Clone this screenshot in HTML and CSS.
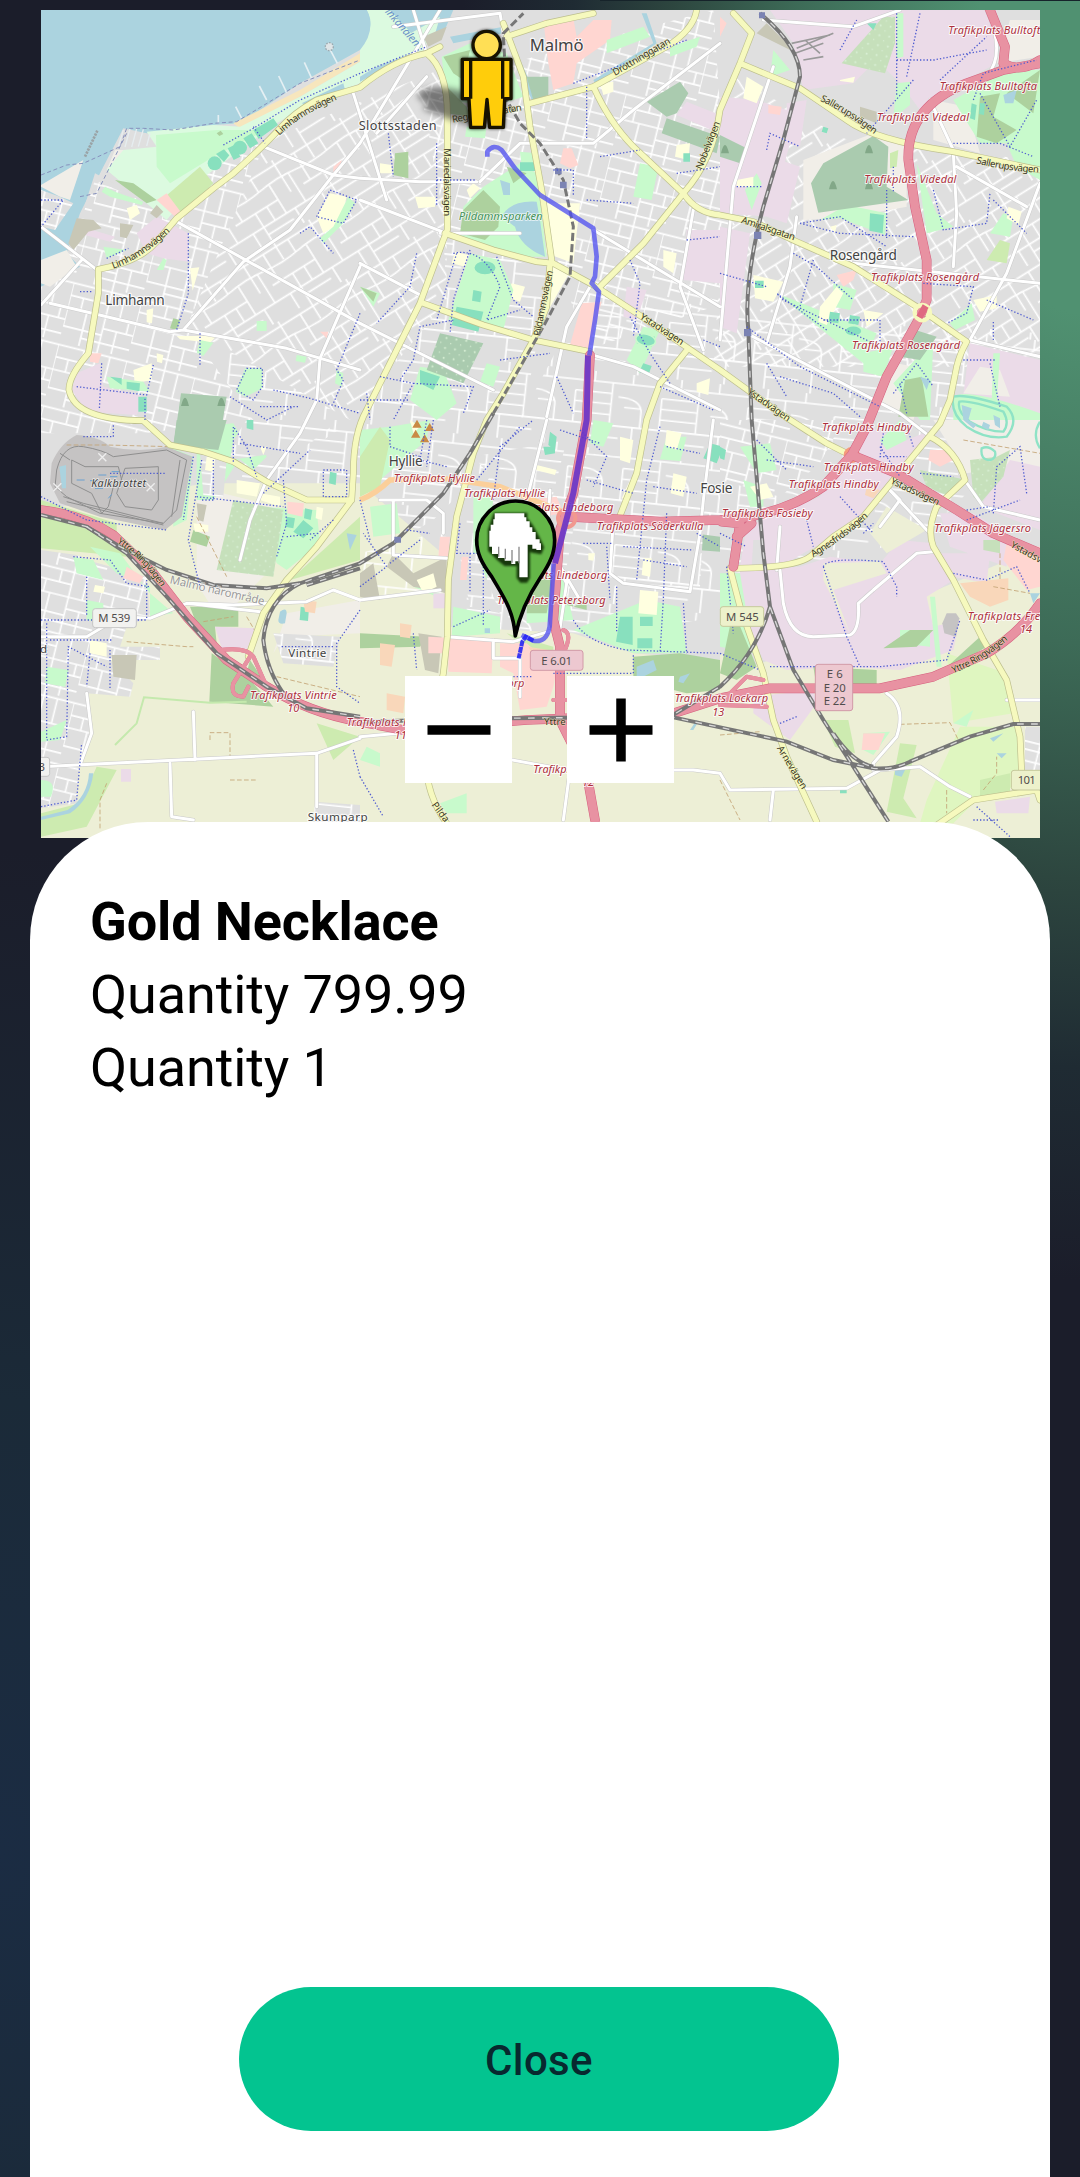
FILE: index.html
```html
<!DOCTYPE html>
<html lang="en">
<head>
<meta charset="utf-8">
<title>Order tracking</title>
<link rel="stylesheet" href="styles.css">
</head>
<body>
<main class="screen">
<section class="map">
<svg class="map-canvas" viewBox="123 30 2997 2484" preserveAspectRatio="none" role="img" aria-label="Map of Malmö">
<defs>
<pattern id="grid-a" width="210" height="190" patternUnits="userSpaceOnUse" patternTransform="rotate(14)"><path class="street" d="M0 10H210M0 48H118M0 86H210M118 122H210M0 142H118M60 166H210M0 10V142M40 48V86M80 10V48M118 0V190M160 10V86M190 86V122M60 86V190M160 122V190"/></pattern>
<pattern id="grid-b" width="240" height="210" patternUnits="userSpaceOnUse" patternTransform="rotate(-32)"><path class="street" d="M0 16H240M0 60Q60 70 120 60T240 60M0 110H150M0 158H240M70 184H160M24 16V110M70 0V60M70 110V210M112 16V60M150 60V158M196 0V110M218 60V158M32 158V210M180 158V210M110 110V158"/></pattern>
<pattern id="grid-c" width="260" height="230" patternUnits="userSpaceOnUse" patternTransform="rotate(6)"><path class="street" d="M0 30H260M20 62H130M20 94H130M20 126H130M0 158H260M150 70Q220 70 222 110V158M170 100H222M20 62V158M130 30V158M60 158V230M60 194H160M200 158V230M75 0V30M190 0V30"/></pattern>
<pattern id="orchard" width="30" height="30" patternUnits="userSpaceOnUse" patternTransform="rotate(8)"><circle class="tree" cx="8" cy="8" r="3"/><circle class="tree" cx="23" cy="23" r="2"/></pattern>
</defs>

<rect class="residential" x="123" y="30" width="2997" height="2484"/>
<path fill="url(#grid-b)" d="M800 420L1340 200 1340 900 1050 1260 560 980Z"/>
<path fill="url(#grid-a)" d="M123 720L800 420 560 980 760 1260 430 1300 123 1300Z"/>
<path fill="url(#grid-c)" d="M760 1260L560 980 1050 1260 1340 900 1330 700 1650 820 1560 1300 1300 1560 1060 1700 700 1560Z"/>
<path fill="url(#grid-a)" d="M1260 260L2140 30 2200 900 1760 1050 1640 680 1340 700Z"/>
<path fill="url(#grid-c)" d="M1760 880L3120 1000 3120 1260 2800 1580 2100 1860 1400 1960 1400 1560Z"/>
<path fill="url(#grid-b)" d="M2200 230L2560 430 3120 480 3120 1100 2140 1100Z"/>

<!-- north-west: coast and Limhamn -->
<g>
<path class="water" d="M123 30H1360L1330 100 1080 150 900 250 720 370 640 375 440 400 370 385 310 500 240 640 200 760 240 800 123 860Z"/>
<path class="bare" d="M123 555L250 480 210 600 180 590 123 560ZM345 450H470L440 510 320 510Z"/>
<path class="residential" d="M123 570L180 590 220 610 165 690 123 680ZM285 520L540 655 440 740 290 810 215 740Z"/>
<path fill="url(#grid-a)" d="M285 540L540 655 440 740 290 810 215 740ZM123 570L220 610 165 690 123 680Z"/>
<path class="bare" d="M123 780L200 750 230 800 150 860 123 850Z"/>
<path class="sand" d="M700 370L900 270 1080 160 1080 185 900 290 720 385Z"/>
<path class="lawn" d="M440 395L640 375 720 380 900 290 1080 185 1320 50 1300 120 1080 250 950 300 830 370 600 540 500 660 320 510 370 450 470 440Z"/>
<path class="park" d="M468 405L650 390H800L640 470 510 550 470 500Z"/>
<path class="meadow" d="M495 590L600 500 640 550 545 645 510 610Z"/>
<path class="retail" d="M470 600L500 580 545 640 530 655Z"/>
<path class="water" d="M905 310L1030 250 1035 270 920 315Z"/>
<path class="forest" d="M345 540L400 550 470 600 440 610ZM540 960l-20-5-10 30 20 5ZM650 400l12-8 8 10-12 6Z"/>
<path class="pitch" d="M683 445l20-10 18 35-20 10ZM730 415l25-15 20 30-25 15ZM760 390l60-35 14 20-58 42ZM985 608l30 15-14 24-24-18Z"/>
<circle class="pitch" cx="644" cy="490" r="21"/><circle class="pitch" cx="720" cy="443" r="21"/><path class="pitch" d="M648 462l24-14 16 18-16 20Z"/>
<path class="industrial" d="M410 700L470 650 565 700V785L490 775 440 760ZM260 685L345 710 330 725 255 705ZM230 1120L300 1090 310 1160 440 1190 410 1245 260 1235 215 1170Z"/>
<path class="builtup" d="M230 655l50 5 25 25-40 10-45 55-15-20ZM360 670l40 5-20 40-20-5ZM450 640l20-25 20 20-20 20Z"/>
<path class="school" d="M380 625l30-10 10 25-30 20ZM570 805l28-3-20 70ZM950 650l40-70 50 10-20 80-50 30ZM440 930l20-5-4 45-16-3ZM400 1110l55-20 0 50-50 10ZM470 1060l20 5-4 25-15-5ZM530 1008h120l-20 20-90-10Z"/>
<path class="park" d="M310 740l70 10-60 25ZM470 810l20-35 10 5-10 30ZM1000 680l45-90 20 20-35 60-60 60-10-15ZM600 1020l40 8-30 40-20-10ZM735 1105h52v60l-50 25-30-15ZM320 1130l110 15 20 30-120-10ZM770 963h30v30h-30ZM330 590l-25-15 10-15 30 15 85 30-5 10ZM1010 1110l20 10-5 40-20-10ZM890 1065l30 5-5 18-28-5Z"/>
<path class="pitch" d="M330 1130l35 5v20ZM380 1145l40 5-2 24-38-8ZM415 1190h25v45h-25Z"/>
<path class="retail" d="M270 1060h35l-10 30-25-5ZM1000 500l25-20-6 25-19 12ZM960 995l25 0-5 20Z"/>
<path class="cemetery" d="M543 1180L680 1190 655 1340H520Z"/>
<path class="trees" d="M543 1218q12-50 24 0ZM652 1218q12-50 24 0Z"/>
<path class="marina" d="M370 390l-15 50M390 386l-15 55M410 386l-15 55M430 388l-15 52M450 400l-10 38"/>
<path class="pier" d="M725 355l-18-35M800 300l-22-42M860 278l-24-50M935 235l-22-48M1012 190l-22-42M655 370V345"/>
<path class="mole" d="M255 470L292 392"/><circle class="lighthouse" cx="988" cy="140" r="12"/>
<path class="ferry" d="M123 525L200 495 250 490 360 440 380 385 430 385 520 390 640 370 710 365 900 250 1080 180M240 590L290 580 380 400"/>
</g>

<!-- north: Malmö centre -->
<g transform="translate(1080 0)">
<path class="lawn" d="M20 30H90L200 150 100 170 0 230V140Q50 80 20 30Z"/>
<path class="water" d="M0 30H20Q50 90 0 150ZM0 230Q90 170 200 158L190 172Q90 190 0 245ZM270 110L430 80V100L280 130ZM700 240L880 130 845 40H860L890 130 710 258ZM480 180L530 290 520 310 470 200Z"/>
<path class="park" d="M245 170L330 130 440 160 490 290 400 320 260 300Z"/>
<path class="forest" d="M250 170L330 150 310 240 280 220ZM240 240L320 320 330 350 260 340Z"/>
<path class="cemetery" d="M500 230H565V285L520 300ZM860 305L960 245 985 280 950 340 920 350ZM920 355L1080 410 1070 460 905 400Z"/>
<path class="industrial" d="M980 305L1080 345 1055 390 950 345ZM980 690H1080V850L970 840ZM800 860l60 10-30 90-40-10Z"/>
<path class="retail" d="M550 60L640 55 650 110 700 60H755L750 120 650 190 640 250 580 270 565 190ZM610 445l25 0 20 50-25 10-30-15ZM665 910l60-5-40 145-55-15Z"/>
<path class="builtup" d="M190 110l70-30-15 40-40 20Z"/>
<path class="school" d="M320 570l20-20 20 15-30 30ZM165 590l60 0 0 30-50 5ZM285 755l40 10-10 35-40-10ZM550 610L660 610 640 790 560 760ZM580 800L630 815 560 940ZM455 850l40 10-15 45-40-15ZM950 435l40-5-5 50-40-10ZM720 250l40-5 0 30-30 10ZM910 750l40 10-10 60-30-20ZM60 490l35 5 0 25-35 0ZM1010 1150l40-15-5 50-35-10Z"/>
<path class="park" d="M370 560L480 490 530 520 560 770 460 770 300 720 310 620ZM840 490l55 10-20 100-55-10ZM330 760L420 780 460 870 430 990 330 980 265 960 300 850ZM850 980l50 10-60 130-40-40ZM180 1100l70 10 40 100-60 50-80-60ZM0 860l60 20-20 40ZM480 455l50 5-5 45-40-5ZM320 380l60-5-5 40-60-5ZM380 1090l40 10-20 60-40-15ZM740 120l110-40 20 30-130 50ZM930 140l90-30-10 30-80 30Z"/>
<path class="forest" d="M370 570L420 620 415 680 375 720 300 700 310 630ZM105 460l40-5 0 80-45-10ZM440 500l60 20-40 30ZM0 860l50 20-10 25Z"/>
<path class="water" d="M425 650Q450 600 530 605L540 660 555 770Q480 740 465 680ZM420 540l30 10 0 35-20 0Z"/>
<path class="pitch" d="M480 487h46v26h-46ZM340 870l25 5-4 32-25-5ZM290 920l80 15-15 60-80-20ZM180 1110l60 20-20 40-40-20ZM840 1000l45 10-10 30-45-10ZM850 1090l25 8-10 28-28-10ZM970 460h20v25h-20Z"/>
<ellipse class="stadium" cx="375" cy="803" rx="34" ry="22"/><ellipse class="stadium" cx="857" cy="1020" rx="30" ry="18" transform="rotate(12 857 1020)"/>
<path class="cemetery" d="M240 1000L370 1030 310 1150 200 1110Z"/><path fill="url(#orchard)" d="M240 1000L370 1030 310 1150 200 1110Z"/>
</g>

<!-- north-east: Rosengård -->
<g transform="translate(2160 0)">
<path class="industrial" d="M150 30H830V190L700 260 600 330 540 250 470 180 400 250 250 270 220 130ZM0 290L110 300 200 330 210 430 150 650 0 640ZM200 310L260 300 240 440 200 430ZM180 480l60 20-40 170-60-20ZM0 680l90 20-40 300-50-20ZM750 1030L960 1080V1260H720ZM0 380L100 390 90 440 0 420Z"/>
<path class="bare" d="M250 480L460 400 560 440 560 620 400 650 250 660ZM640 300l100 20 40 140-140-40ZM830 190L870 60 960 60V170ZM780 1100l60 10 30 80-140-10ZM530 1090l100 20-50 150-120-60Z"/>
<path class="builtup" d="M140 70L230 160 110 100ZM420 320l50 15 0 35-50-20Z"/>
<path class="forest-lt" d="M490 50h35v80l-30 90-130-30Z"/><path fill="url(#orchard)" d="M490 50h35v80l-30 90-130-30Z"/>
<path class="park" d="M530 40h20v130l-20 5ZM530 250l40-5 0 70-50 40ZM700 300L860 210H960V540L890 500 860 430H780ZM590 490l60 150 50 40-80 20ZM300 660L380 615 500 640 495 705 360 655ZM170 880L470 1000 430 1090ZM340 850l70 20-20 60-50-10ZM110 520l15 30-30 80-20-60ZM430 1060l90-20-30 90-60-15ZM160 150l50 60-60 20ZM690 970l65-60 10 50-60 30ZM520 1150L640 1020 630 1260H600ZM820 1060h20l-10 150-15-5ZM700 1190Q740 1160 960 1240V1260H700ZM850 640l30 10-10 60-60-10Z"/>
<path class="forest" d="M780 290l60-10-20 70 70 40-60 40-60-20ZM860 280l100-70-20 130ZM555 1140l50-10 20 120-90 0Z"/>
<path class="water" d="M850 285l40-15-10 40-25 0ZM600 1130l30 10-10 30Z"/>
<path class="cemetery" d="M273 550L310 490 460 408 505 440 500 560 565 600 295 638ZM570 985L650 1010 600 1080 540 1070ZM0 405L80 445 60 490 0 470Z"/>
<path class="meadow" d="M510 460l25-10-5 50-20 5ZM840 720l30 10-10 60-60-10Z"/>
<path class="trees" d="M435 460q12-50 24 0ZM327 568q12-50 24 0ZM435 568q12-50 24 0ZM3 460q12-50 24 0Z"/>
<path class="school" d="M300 920l50-60 20 20-50 95-25-10ZM430 930l60 10-50 40ZM100 825l90 20-30 60-55-10ZM760 900l70-15 0 40-50 10ZM330 680l20-5-5 25ZM865 620l40 15-10 40-35-20ZM80 230l50 30-20 50-40-15ZM360 240l45-10-5 18-40-5ZM50 540l50-10 0 30-50 0Z"/>
<path class="retail" d="M350 825l60-15-10 30-30 20ZM145 315l40 5-5 25-35-5ZM0 50l20 20-20 40Z"/>
<path class="pitch" d="M755 310l15 5-5 45-15-5ZM450 640l42 5-4 55-40-8ZM780 310l15 0-3 35-15-3ZM105 842h26v22h-26ZM330 935l30 5-5 30-30-5ZM390 945l30 5-5 25-30-5ZM310 380l15 5-5 15-15-5ZM440 70l30 0-10 20Z"/>
<ellipse class="stadium" cx="400" cy="993" rx="26" ry="16"/>
<path class="yard" d="M215 130L330 105M230 145L340 100M225 160L310 130M250 180L310 170M255 120L300 160"/>
</g>

<!-- south-west: Kalkbrottet and Vintrie -->
<g transform="translate(0 1260)">
<path class="farm" d="M123 270L620 190 1080 190V1260H123Z"/>
<path class="residential" d="M123 390L230 405 260 420 440 470 450 590 380 620 360 680 480 680V720L330 720 400 790 390 830 260 820 270 960 240 1020 230 1150 123 1165Z"/>
<path fill="url(#grid-a)" d="M123 390L230 405 260 420 440 470 450 590 380 620 360 680 480 680V720L330 720 400 790 390 830 260 820 270 960 240 1020 230 1150 123 1165Z"/>
<path class="bare" d="M590 200L830 260 820 440 660 600 590 490ZM860 580L1080 540 1080 640 850 650 820 700Z"/>
<path class="meadow" d="M123 240L350 310 350 345 123 310ZM123 290L340 350 380 410 280 400 123 385ZM870 480L1080 290 1080 420ZM290 1040l60 10-90 170-137 30V1180L240 1150ZM950 910l130 40-80 70Z"/>
<path class="park" d="M510 80L580 110 560 300 520 320ZM590 20L700 10 740 80 640 240 590 240ZM770 260L950 270 960 370 860 450 830 430ZM270 380l90 20 90 120 70 60-70 10 0-90-100-40ZM220 410l60 10 30 60-80-20ZM260 540l50 10 0 60-50-10ZM140 740l65 10-10 50-60-10ZM200 900l-20 60-57 5v-30ZM123 1080q50 0 30 50l-30 0ZM700 60l60-30 40 80-40 40-50-40Z"/>
<path class="cemetery" d="M530 0H680L655 90 520 75Z"/><path class="forest-lt" d="M700 240L850 270 820 470 650 450Z"/><path fill="url(#orchard)" d="M700 240L850 270 820 470 650 450Z"/>
<path class="forest" d="M570 560L715 560V620L645 620 650 670 600 640ZM635 700L760 790 820 860 628 845ZM750 720l40 60-50-20ZM580 330l50 20-10 30-50-15Z"/>
<path class="quarry" d="M155 130Q180 70 230 45 300 50 330 80 420 100 500 80L578 110 545 290 495 330 300 290 180 250 150 190Z"/>
<path class="quarry-line" d="M170 150Q190 70 250 80T340 110L500 90 560 120 530 270 490 310 300 280 200 230 165 200ZM215 120l40 20 100 0 10 40-25 20-15 60-20 20-30-60-60-30ZM375 145l100-5 0 100-20 30-80-10-25-40ZM180 100l30 20M190 230l60 20 240 60M200 245l290 70M540 120l-25 170"/>
<path class="pond" d="M295 165h24M335 155h22M230 180h24M270 182h24M285 205h24M330 170h22M325 235l10-12"/>
<path class="water" d="M178 140l20-5 0 70-12 0ZM840 575q20-15 20 5l-5 30q-20 5-20-10ZM280 1060q-10 80-70 120l-87 20v-10l80-20q60-40 64-110ZM1040 340l10 50 20-45Z"/>
<path class="industrial" d="M645 620L765 625 740 690 665 685ZM363 1047h30v38h-30Z"/>
<path class="builtup" d="M335 705l75 0-5 75-65-10ZM590 250l30 5-10 50-15-5Z"/>
<path class="residential" d="M820 640L1020 650 1000 740 850 730ZM945 1145L1080 1155V1210H940ZM600 100l80 20-10 110-60-5ZM690 120L900 90 1020 0 740 0 700 60Z"/>
<path fill="url(#grid-c)" d="M820 640L1020 650 1000 740 850 730ZM945 1145L1080 1155V1210H940ZM600 100l80 20-10 110-60-5ZM690 120L940 80 1060 0 740 0 700 60Z"/>
<path class="school" d="M270 660l50 10 0 40-50-10ZM620 110l25 5-5 40-25-5ZM710 180l70 10-10 40-60-10ZM780 220l60 10 0 30-60-20ZM950 260l20 5-5 35-18-5ZM580 310l45 5 0 20-40 0ZM285 495l30 5-5 20-30-5ZM780 80l20 0-10 25Z"/>
<path class="retail" d="M380 440l50 30-10 20-50-15ZM862 245l50 5-5 40-45-10Z"/>
<path class="pitch" d="M910 300l30 25-30 30-30-20ZM860 290l25 5-5 30-25-5ZM915 265l22 5-5 30-20-5ZM990 155l20 5-3 35-20-5ZM740 0h20v30l-20-5ZM902 560l25 5-3 38-25-3Z"/>
<path class="stop" d="M910 540l40 5-5 35-30-5Z"/>
<path class="track" d="M380 665L560 680 580 680M630 960V938H690V1010M690 1080H770M300 1225V1140L320 1090M610 605L700 590M200 75H320L510 80M590 290L680 470M740 590L775 650M830 770L1080 830"/>
<path class="hedge" d="M345 975L410 910 432 832 630 848 740 845"/>
</g>

<!-- south: Hyllie and Lindeborg -->
<g transform="translate(1080 1260)">
<path class="farm" d="M0 190L270 420 270 620 640 640 820 700 1080 720V1260H0Z"/>
<path class="park" d="M0 30L90 20 210 0 200 60 60 180 0 230ZM30 260l80-10 10 90-80 10ZM280 560L420 590 420 640 275 650ZM500 540L600 440 640 600 500 610ZM700 0l60 10-30 70-40-10ZM640 630L860 540 960 560 980 700 820 700ZM860 250l60-200 60 0-60 230ZM340 220l60 10-20 260-40-10ZM160 500l40-40 60 30-30 40ZM20 980l40 20 0 40-60-20ZM240 1150l80-30 0 60-60 0Z"/>
<path class="meadow" d="M0 110L60 20 90 60 60 200 0 230ZM880 330l60 0-10 60-60-10ZM440 640l140 40 0 60-60-40Z"/>
<path class="cemetery" d="M1000 340L1080 350V395L1010 390Z"/>
<path class="forest" d="M510 430L580 470 560 580 500 580ZM820 710L960 700 1080 720V810L980 820 820 780ZM600 550l80-40 0 60ZM0 640L200 650 180 680 0 685Z"/>
<path class="residential" d="M340 110L620 60 560 300 460 240ZM680 100L1040 130 1020 500 780 490 640 560 620 440ZM300 410L350 400 420 580 330 560Z"/>
<path fill="url(#grid-c)" d="M340 110L620 60 560 300 460 240ZM680 100L1040 130 1020 500 780 490 640 560 620 440ZM300 410L350 400 420 580 330 560ZM0 400L260 330 250 520 0 540Z"/>
<path class="builtup" d="M100 400l60 60 100-50 0 110-100-20-80-60ZM0 460l40-30 20 110-60-10ZM175 640l70 10-10 110-40-10Z"/>
<path class="retail" d="M205 650L400 660 395 760 265 755 265 700 205 700ZM420 670L500 670 590 750 580 800 560 860 480 870 460 760 420 740ZM240 350l30 0-5 60-30 0ZM305 410l20 0-5 70-20 0ZM500 240l90-10 20 50-60 10Z"/>
<path class="stop" d="M60 670l45 5-10 65-35-5ZM120 610l35 5-5 40-30-5ZM80 820l55 10-5 50-50-10ZM505 680l60 10 10 60-60-50Z"/>
<path class="industrial" d="M220 520h40v45h-40Z"/>
<path class="school" d="M780 50l40 10-10 70-30-10ZM940 160l40 10-10 60-38-10ZM530 135l60 15-5 15-58-15ZM840 510l55 5-5 70-55-5ZM920 30l45 10-15 50-35-15ZM850 415l25 0-5 55-25-5ZM685 400l20 0-5 22-15-2ZM810 180l-10 60-15-5ZM150 0l30 20-20 20ZM170 480l50-20 10 40-40 20Z"/>
<path class="pitch" d="M570 35l20 15-5 40-20-15ZM550 80l35 0 0 20-30 5ZM780 590h38v85l-50-10ZM840 590h38v28h-38ZM832 655h45v30h-45ZM1050 70l40 10-20 50-40-15Z"/>
<path class="water" d="M830 740l50-20 10 30-60 30ZM960 770l30-10-20 30-15-5ZM990 930l20-30 5 5-15 25ZM374 625h16v14h-16Z"/>
<path class="hill" d="M157 23l14-24 14 24ZM195 33l14-24 14 24ZM153 53l14-24 14 24ZM180 67l14-24 14 24Z"/>
</g>

<!-- south-east: Fosie and Agnesfrid -->
<g transform="translate(2160 1260)">
<path class="farm" d="M0 700L100 740 960 380V1260H0Z"/>
<path class="bare" d="M640 0H960V160L860 140 740 160Z"/>
<path class="residential" d="M0 0H370L300 130 180 230 0 180Z"/>
<path fill="url(#grid-a)" d="M0 0H370L300 130 180 230 0 180Z"/>
<path class="industrial" d="M440 20L560 60 660 20 500 200 380 330 250 400 200 430 60 440 80 320 300 230ZM60 450L240 440 330 410 480 430 540 360 640 370 700 480 620 530 640 620 720 600 700 690 540 750 380 740 200 750 130 720 60 560ZM650 400L810 400 800 490 700 470ZM780 260L870 120 960 140V330ZM100 830L280 810 290 850 210 960 100 880ZM825 1145L930 1130 925 1180 830 1180ZM660 280l100 0 100 60 0 100-170-60Z"/>
<path class="farm" d="M500 260L620 330 500 400 450 340ZM310 430L480 425 500 460 340 510 390 640 310 480Z"/>
<path class="lawn-warm" d="M680 700L860 760 880 880 700 910ZM720 920L890 920 910 1090 770 1140 700 1210 600 1210 620 1140Z"/>
<path class="meadow" d="M310 900h75l20 100-60-20ZM540 970l50 5-40 160 40 60-90-20ZM780 1080l90-20 0 60-90 20Z"/>
<path class="park" d="M0 460L60 460 100 700 0 680ZM60 80l90-10 20 80-60 10ZM70 180l60 20 0 60-40 0ZM540 630l90 0 0 50-90-10ZM540 0L560 60 500 90 480 60ZM700 910l60-40-20 50ZM630 530l15 0 20 210-15 0ZM430 940l80-5-50 70-30-15Z"/>
<path class="forest" d="M40 570L110 740 50 780 0 760ZM660 760L780 650 800 680 700 740ZM280 740l190 10 0 60-180-10ZM570 630l70 0-50 50-100 5Z"/>
<path class="forest-lt" d="M750 120L830 110 870 90 850 170 780 250 760 230ZM600 150L740 180 690 230 620 200ZM790 360l50 0 0 40-50-10Z"/><path fill="url(#orchard)" d="M750 120L830 110 870 90 850 170 780 250 760 230ZM600 150L740 180 690 230 620 200Z"/>
<path class="retail" d="M630 90L680 90 700 120 660 140 625 120ZM860 370L960 380 960 500 920 510 850 420ZM430 940l65 0-20 50-50 0Z"/>
<path class="stop" d="M720 490L865 475 865 540 810 560 750 530ZM440 200l40 10-20 25-25-10Z"/>
<path class="quarry" d="M680 580h28l10 15-10 55-35-10-6-30Z"/>
<path class="pitch" d="M0 80l18 10-5 30-13-5ZM360 1105h20v15h-20Z"/>
<path class="school" d="M90 200l50-10 20 40-40 10Z"/>
<path class="race" d="M700 -70Q740 -80 860 -40 900 0 860 50 800 60 740 20 690 -20 700 -70ZM718 -55Q750 -60 850 -25 870 10 850 35 800 35 750 5 710 -25 718 -55ZM785 85q20-10 40 10 5 20-15 25-30 0-25-35ZM960 5q-25 40 0 80"/>
<path class="water" d="M725 -45l30 10-10 35 25 15-10 10-30-25ZM790 5l20 10-5 15-20-10ZM820 -15l20 10 0 30-15-10ZM525 1045l30 5-10 20-20-5ZM830 1000l30 0-15 15ZM810 955l40-15-30 25ZM930 520l30 0-20 30Z"/>
<path class="residential" d="M915 920h45v130h-45ZM100 360l30 0 0 80-35 0Z"/><path fill="url(#grid-a)" d="M915 920h45v130h-45Z"/>
<path class="track" d="M0 945L120 935M540 913L690 908 715 960M0 1080L60 1200M680 1110V1180M790 1110L830 1060 830 1010M570 0L600 30M730 60L960 100M820 500L930 520M840 400V480"/>
</g>

<!-- white main streets -->
<g class="tertiary-casing" id="tertiary-under"><path d="M1320 30L1080 430 1000 525 870 690 730 785 550 990 510 995 150 910M790 440L1000 525 1080 535 1260 545 1430 545M530 665L1080 970M550 990L860 1045 1080 1110M1080 800L960 1075 950 1200 900 1300 800 1440 750 1560 720 1680M123 680L285 805M245 780L123 915M1060 280L1160 600M1080 600L1340 700M1080 790L1270 890M1130 400L1280 230M1320 700L1560 700"/>
<path d="M1240 30L1280 160M1180 80L1500 40 1510 100M1440 545L1560 430 1780 430 1900 330 2160 130M2080 630L2040 860 2110 1050M1780 690L2160 920M1770 860L1700 980 1640 1250M1760 1060L1900 1100 2160 1230M1080 970L1300 1080 1480 1170M2160 1020L2200 560 2320 200"/>
<path d="M2290 60L2560 80 2700 30M2960 30Q3020 160 2960 230L2790 300 2860 450M2870 500L3080 620M3120 550L3020 820 2910 1020 3120 1070M2860 460L2870 640 2860 800M2560 790L3120 850M2240 1000L2700 1240 2790 1310M2390 650L2370 800 2300 1030M3120 1560L2950 1520 2880 1420M2660 1460L2780 1590 2790 1600"/>
<path d="M123 1910L260 1910 360 1850 450 1855 560 1810 780 1835M560 1810L700 1815 920 1805 1000 1770 1080 1800M123 2300L950 2260 1080 2215M580 2135L585 2280M510 2290L515 2450 580 2460M950 2260L950 2420M240 2295L275 2200 260 2080M1140 1500L1280 1500 1330 1540 1330 1600M1180 1500L1180 1665 1340 1675"/>
<path d="M1340 1910L1540 1925 1680 1885 1700 1750 1660 1680M1080 1800L1320 1770M1480 1920V1975L1560 1975V2090M1840 1560L1830 1720 1870 1750 2070 1775 2100 1600 2110 1500 2140 1260M1510 2275L1700 2310 2080 2310 2160 2320 2190 2370 2540 2365 2640 2310 2760 2300 2850 2360 2910 2390M1710 2310L1690 2460M1620 1690L1580 1500 1640 1260M1080 2210L1300 2190M1650 1470L1640 1630 1740 1800"/>
<path d="M2340 1710L2350 1810Q2370 1910 2440 1910L2550 1905Q2580 1890 2575 1810L2620 1770 2750 1660 2800 1655M2330 1710L2340 1580M2320 2370L2310 2460M2660 2080Q2720 2120 2690 2210L2620 2290V2310M2670 1470L2700 1500 2640 1580M3020 2100L3120 2100"/></g>
<use href="#tertiary-under" class="tertiary"/>

<!-- yellow secondary roads -->
<g class="secondary-casing" id="secondary-under">
<path d="M1320 140L1280 160Q1180 180 1080 262L950 300Q880 340 840 385T700 520L640 565 530 655 470 725Q420 785 295 808V880L265 1060Q205 1130 207 1170 225 1260 430 1262L510 1335 610 1355 700 1385 800 1445 920 1500H1055M1280 160Q1345 210 1342 360V690L1330 720 1260 910 1100 1230Q1060 1300 1060 1420L1055 1500 950 1640 860 1740 790 1840 745 1970"/>
<path d="M1520 110L1640 70 1780 40M1510 70L1570 230 1590 380 1625 570 1655 780M1590 310L1780 260 2000 140Q2080 90 2090 30M1780 260Q1830 370 1900 440L2050 580Q2090 640 2160 645L2260 665 2390 725 2560 800 2750 920 2900 1025Q2880 1060 2870 1100L2850 1200 2820 1270 2590 1550 2500 1610 2430 1670Q2380 1705 2190 1705L2220 1820 2290 2020 2320 2160 2360 2270 2450 2465M2050 580L1930 730 1800 860M2050 580Q2140 480 2160 330L2220 190 2255 100 2200 40M2220 190L2400 265 2540 360Q2620 420 2860 455L3120 510"/>
<path d="M1335 700L1480 750 1610 785 1660 790 1780 855 1910 940 2065 1045 2160 1110 2340 1240 2480 1330 2550 1365M1270 910L1450 975 1600 1020 1770 1055M1650 790L1640 920 1600 1020 1510 1180 1460 1260 1420 1360 1370 1550 1345 1740 1342 1910 1330 2020 1280 2260Q1270 2370 1340 2470M2065 1045L1980 1150 1940 1260 1910 1420 1855 1560"/>
<path d="M2790 1310Q2870 1350 2895 1440L2810 1520Q2780 1590 2800 1640L2860 1740 2950 1920 3020 2040 3060 2210 3065 2320M2760 2510L2920 2400 3110 2370 3120 2400"/></g>
<use href="#secondary-under" class="secondary"/>
<g class="orange"><path d="M1080 1500Q1130 1480 1170 1440L1330 1435 1500 1460 1700 1540"/><circle cx="2555" cy="1365" r="24"/></g>

<!-- motorways -->
<g class="motorway-casing" id="motorway-under">
<path d="M2970 30L3015 140 3010 190Q3060 220 3120 180M3120 190L3010 210 2900 250Q2720 320 2725 480L2745 620 2780 780V900L2755 960 2660 1130 2600 1280 2555 1365 2470 1460Q2340 1550 2160 1560L1980 1565 1700 1550M2555 1365L2690 1420 2870 1530 2980 1600 3120 1660M2165 1565L2220 1570 2200 1700M2255 1570L2210 1610"/>
<path d="M1770 1065L1760 1260 1720 1480 1680 1590 1660 1860 1680 1940 1680 2160 1760 2320 1785 2460"/>
<path d="M123 1530Q250 1545 340 1605L460 1720 560 1850 680 1980 800 2060Q930 2140 1080 2165L1210 2190 1580 2160 1700 2155 2020 2140 2160 2095 2310 2065 2640 2065 2800 2030 2960 1960Q3060 1900 3120 1810"/>
<path class="ramp" d="M660 1950Q740 1940 760 1970L800 2060M750 1970L700 2050Q690 2090 730 2090L745 2060M2190 2080L2240 2030 2290 2040M2160 2115L2300 2120M1690 1890Q1720 1900 1690 1960M1660 2100L1700 2100"/></g>
<use href="#motorway-under" class="motorway"/>
<circle class="roundabout-yellow" cx="2767" cy="938" r="23"/><path class="underpass" d="M2777 918L2758 952"/><circle class="roundabout-orange" cx="1700" cy="1555" r="26"/>

<!-- railways -->
<g class="rail" id="rails">
<path d="M123 1545L260 1580 360 1640 500 1710 640 1755 800 1765 900 1750 1080 1690 1180 1630 1330 1480 1410 1360 1480 1240"/>
<path d="M260 1580L380 1660 500 1790 650 1960 800 2060 920 2125 1080 2150M900 1750Q800 1800 790 1920 800 2010 850 2080M920 1755L1080 1705"/>
<path d="M2280 40Q2400 140 2400 230L2350 420 2290 620Q2230 850 2245 990L2255 1260 2290 1660 2310 1820 2380 2010 2470 2160 2560 2300 2665 2465M2310 1820Q2270 1960 2160 2060L2010 2150M1080 2165L1500 2155 2010 2150 2360 2225 2500 2280 2620 2305Q2680 2310 2730 2285L2910 2210 3040 2172H3120M2500 2200Q2560 2290 2620 2300"/></g>
<use href="#rails" class="rail-dash"/>
<path class="rail-thin" d="M1480 1240L1630 980 1710 830 1720 680 1690 540 1620 430 1560 370 1520 300 1510 100 1570 40"/>
<path class="station" d="M1665 505h20v18h-20ZM1680 545h20v20h-20ZM2262 695h22v22h-22ZM2232 987h22v22h-22ZM1183 1610h20v18h-20ZM2277 37h18v18h-18Z"/>

<!-- cycle paths -->
<g class="cycle">
<path d="M670 435L760 385 900 300 1080 220 1280 140M760 380L795 430M565 700V880L530 990M123 600L190 600 123 680M950 650L990 570 1070 600 1030 670ZM900 700L930 680 1000 760M320 775L385 745M740 1105H787V1160L760 1200 710 1170ZM820 1170L930 1195 1080 1240M1080 940L1010 1110 1030 1140 1000 1210M230 1160L440 1185 460 1095M305 1090L298 1230M435 1260V1190M690 1190L800 1260 880 1220M600 1000V1100M240 875H280M780 1220H900"/>
<path d="M1310 430V620M1165 400L1180 530M1250 760L1230 860 1130 970M1360 760Q1450 740 1500 860L1460 960 1560 930M1410 750L1360 900 1350 1000M1760 600L1900 610M1660 510L1720 510V590M1800 470L1920 450M1890 780L1920 850 1900 1010M1890 950L1950 1060 2010 1150M2160 820L2300 860M1140 1130L1240 1150 1180 1260M1240 1150L1420 1160 1390 1240M1670 1130L1720 1240M1720 250L2060 120M2030 520L2160 500M2060 720L2160 710M1360 960L1260 980 1240 1080 1200 1140M1500 1080L1650 1060M1760 260V420M1310 540H1430M1080 1200H1230M1100 1180L1110 1260M1370 760L1310 960M1490 770L1540 900 1600 950M1980 1160L2140 1230M2110 1020L2160 1040"/>
<path d="M2690 40V180L2810 180M2800 180L2960 150M2690 180V290M2720 230L2760 40M2400 670L2520 700 2740 710M2400 670L2520 650 2660 740M2380 760L2450 800 2560 900M2480 990L2330 880 2350 900 2620 1030M2800 570L2830 690 2960 670 2970 580M2660 570V720M2770 850L2920 860 2900 940 2840 970M2960 900L3100 960M2970 1090L3000 1220M2240 980L2400 1100 2640 1220M2300 1090L2360 1190M2940 280L3030 440 3110 300M2860 430L3000 430 3100 470M2740 240L2600 400M2680 500V580M2680 1180L2750 1090 2800 1160M2980 1020V960M2300 450L2310 400 2400 440M2440 780L2400 920M2470 960H2640V1030M2210 560H2290M2520 150L2570 60M2920 300L2950 220 3110 180M2820 240L2960 110M2980 600L3080 700M2890 1080H2990M2720 1240L2700 1150M2340 1130L2500 1180 2580 1250"/>
<path d="M123 1860L440 1860M140 1870V2220L200 2210 205 1940 320 2000M330 1950V2070M440 1740V1860M220 1670L330 1680 380 1750 450 1760M260 1730V1850M123 2420L230 2400 245 2230M123 1490L260 1560 500 1590M580 1370L550 1560M605 1380L565 1620 600 1760M640 1380V1500H600M700 1385V1280L740 1340 770 1430M590 1490L850 1520M850 1440L860 1570 830 1670M860 1610L950 1600M1080 1830L1010 1930V2060L1080 2110M720 1330L900 1360M845 1940H1000M1060 2250L1080 2330M150 1920H340M270 1960L260 2060M250 1310H340V1270M330 1420H500M790 1480L930 1350M970 1410H1040V1490L970 1490ZM1000 1560L930 1620"/>
<path d="M1080 1760L1160 1700 1090 1600M1170 1280V1340L1260 1370M1300 1260L1280 1400M1220 1590L1290 1600M1170 1690L1260 1620M1240 1900L1250 2010M1480 1500L1500 1340 1600 1260M1450 1680V1880M1380 1570L1370 1660 1560 1660M1740 1290L1820 1370 1780 1460M1750 1630L1840 1630M2000 1540L1990 1800 1980 1960M1820 1640L1830 1800M1720 1860Q1760 1930 1880 1950L2160 1960M1980 1280L1940 1440 1910 1740M2050 1810L2060 1960M1660 2020L1900 2020V1960M2090 1600L2160 1640M1490 2030H1600M1080 2330L1150 2450M1360 1880L1470 1830M1280 1260L1260 1380 1340 1400M1430 1440L1560 1280M1680 1290L1800 1330M1760 1440L1900 1480M1850 1760V1900M1930 1680L2060 1700M1870 1640L2080 1650M2000 1340L2100 1360M1960 1460L2090 1480M1110 1620L1080 1500M1410 1660V1780M1490 1600H1560"/>
<path d="M2160 1600L2240 1640M2270 1320L2360 1410M2300 1380L2440 1400M2420 1560L2440 1640M2520 1490L2620 1600M2470 1700Q2480 1670 2650 1685L2690 1760V1790M2470 1700L2540 1910 2580 2000M2310 2000L2640 2000 2840 1980 2880 1860M2860 1720L2960 1740 3050 1700 3090 1780M2980 1540L2990 1400 3060 1340 3080 1480M2900 1530L2970 1520M2640 1340L2700 1430M2930 2420L3030 2510M2920 2460H3000M2180 1700L2200 1900M2340 2170L2390 2150M2650 1300L2640 1370 2720 1370M2160 1960L2280 2010M2720 1280L2740 1340M2590 1600L2620 1570M2900 1560L3060 1500M2760 1420L2860 1430"/></g>

<path class="mine" d="M295 1360l24 24M319 1360l-24 24M160 1450l24 24M184 1450l-24 24M440 1450l24 24M464 1450l-24 24"/>

<!-- road shields -->
<g class="shield"><rect class="shield-plain" x="278" y="1826" width="131" height="57" rx="8"/><rect class="shield-plain" x="100" y="2272" width="49" height="57" rx="8"/><rect class="shield-red" x="1591" y="1951" width="158" height="60" rx="8"/><rect class="shield-red" x="2446" y="1993" width="112" height="139" rx="8"/><rect class="shield-yellow" x="2161" y="1820" width="130" height="59" rx="8"/><rect class="shield-yellow" x="3034" y="2311" width="96" height="59" rx="8"/>
<text x="343" y="1867" textLength="96">M 539</text><text x="125" y="2313">3</text><text x="1670" y="1995" textLength="92">E 6.01</text><text x="2504" y="2035" textLength="48">E 6</text><text x="2504" y="2075" textLength="66">E 20</text><text x="2504" y="2115" textLength="66">E 22</text><text x="2227" y="1863" textLength="98">M 545</text><text x="3080" y="2353" textLength="54">101</text></g>

<g class="place"><text class="city" x="1670" y="153" textLength="162">Malmö</text><text x="405" y="916" textLength="178">Limhamn</text><text class="suburb" x="1193" y="389" textLength="234">Slottsstaden</text><text x="2590" y="781" textLength="202">Rosengård</text><text x="1217" y="1399" textLength="102">Hyllie</text><text x="2149" y="1480" textLength="96">Fosie</text><text class="village" x="922" y="1971" textLength="114">Vintrie</text><text class="village" x="1013" y="2464" textLength="180">Skumparp</text><text class="village" x="131" y="1959">d</text></g>
<text class="park-name" x="1502" y="661" textLength="252">Pildammsparken</text><text class="quarry-name" x="356" y="1460" textLength="164">Kalkbrottet</text>
<text class="region-name" transform="translate(508 1750) rotate(13)" textLength="290">Malmö närområde</text>
<text class="water-name" transform="translate(1154 36) rotate(49)" textLength="140">inkanalen</text>

<g class="junction">
<text x="2983" y="102" textLength="276">Trafikplats Bulltoft</text><text x="2965" y="269" textLength="292">Trafikplats Bulltofta</text><text x="2769" y="362" textLength="276">Trafikplats Videdal</text><text x="2731" y="550" textLength="276">Trafikplats Videdal</text><text x="2775" y="844" textLength="324">Trafikplats Rosengård</text><text x="2718" y="1046" textLength="324">Trafikplats Rosengård</text>
<text x="2601" y="1294" textLength="270">Trafikplats Hindby</text><text x="2606" y="1412" textLength="270">Trafikplats Hindby</text><text x="2501" y="1465" textLength="270">Trafikplats Hindby</text><text x="2302" y="1552" textLength="272">Trafikplats Fosieby</text><text x="2948" y="1595" textLength="290">Trafikplats Jägersro</text><text x="3012" y="1860" textLength="218">Trafikplats Fre</text><text x="3078" y="1900">14</text>
<text x="1303" y="1445" textLength="244">Trafikplats Hyllie</text><text x="1514" y="1490" textLength="244">Trafikplats Hyllie</text><text x="1680" y="1532" textLength="320">Trafikplats Lindeborg</text><text x="1662" y="1738" textLength="320">Trafikplats Lindeborg</text><text x="1654" y="1813" textLength="326">Trafikplats Petersborg</text><text x="1950" y="1591" textLength="320">Trafikplats Söderkulla</text><text x="880" y="2096" textLength="260">Trafikplats Vintrie</text><text x="880" y="2135">10</text><text x="1175" y="2179" textLength="270">Trafikplats Naffen</text><text x="1202" y="2217">11</text><text x="1548" y="2060">orp</text><text x="2164" y="2106" textLength="280">Trafikplats Lockarp</text><text x="2155" y="2147">13</text><text x="1720" y="2320" textLength="240">Trafikplats Kroks</text><text x="1764" y="2357">12</text></g>

<defs><path id="n1" d="M340 806Q430 775 515 690"/><path id="n2" d="M838 407Q900 345 1020 295"/><path id="n3" d="M1332 445V650"/><path id="n4" d="M1845 228L2015 128"/><path id="n5" d="M2105 510L2162 365"/><path id="n6" d="M2460 302Q2540 340 2625 405"/><path id="n7" d="M2928 490Q3030 515 3120 518"/><path id="n8" d="M2222 668L2390 724"/><path id="n9" d="M1918 955L2050 1040"/><path id="n10" d="M1620 1010Q1640 900 1660 810"/><path id="n11" d="M2240 1180L2370 1270"/><path id="n12" d="M350 1628Q430 1680 485 1765"/><path id="n13" d="M2440 1672Q2530 1620 2610 1545"/><path id="n14" d="M2670 1450L2820 1520"/><path id="n15" d="M3030 1640L3120 1690"/><path id="n16" d="M2330 2245L2410 2375"/><path id="n17" d="M2860 2020Q2950 1985 3035 1910"/><path id="n18" d="M1294 2415L1350 2490"/></defs>
<g class="road-name"><text><textPath href="#n1" textLength="206">Limhamnsvägen</textPath></text><text><textPath href="#n2" textLength="206">Limhamnsvägen</textPath></text><text><textPath href="#n3" textLength="204">Mariedalsvägen</textPath></text><text><textPath href="#n4" textLength="195">Drottninggatan</textPath></text><text><textPath href="#n5" textLength="152">Nobelvägen</textPath></text><text><textPath href="#n6" textLength="192">Sallerupsvägen</textPath></text><text><textPath href="#n7" textLength="190">Sallerupsvägen</textPath></text><text><textPath href="#n8" textLength="168">Amiralsgatan</textPath></text><text><textPath href="#n9" textLength="150">Ystadvägen</textPath></text><text><textPath href="#n10" textLength="200">Pildammsvägen</textPath></text><text><textPath href="#n11" textLength="150">Ystadvägen</textPath></text><text><textPath href="#n12" textLength="190">Yttre Ringvägen</textPath></text><text><textPath href="#n13" textLength="206">Agnesfridsvägen</textPath></text><text><textPath href="#n14" textLength="158">Ystadsvägen</textPath></text><text><textPath href="#n15">Ystadsv</textPath></text><text><textPath href="#n16" textLength="146">Arnevägen</textPath></text><text><textPath href="#n17" textLength="194">Yttre Ringvägen</textPath></text><text><textPath href="#n18">Pilda</textPath></text><text transform="translate(1358 368) rotate(-10)" textLength="212">Regementsgatan</text><text x="1632" y="2175">Yttre</text></g>

<!-- delivery route -->
<path class="route" d="M1462 470V455Q1480 430 1505 450L1545 505 1620 585 1660 610 1780 685 1790 770 1785 830 1775 850 1797 875 1785 960 1768 1066"/>
<path class="route route-strong" d="M1764 1066L1760 1260 1720 1480 1665 1690"/>
<path class="route" d="M1661 1690L1649 1880Q1640 1930 1600 1922L1565 1905"/><path class="route-end" d="M1600 1922L1577 1910 1567 1925 1556 1975"/>

<!-- customer marker -->
<g class="person"><path class="person-shadow" d="M1260 275Q1300 250 1390 275L1450 330 1440 385Q1380 370 1290 335 1250 325 1290 310 1240 300 1260 275Z"/>
<g class="person-shape"><path d="M1387 178H1533V296H1514L1510 382H1469L1461 298 1453 382H1412L1407 296H1387Z"/><circle cx="1460" cy="135" r="41"/><path d="M1412 182V296M1508 182V296"/></g></g>

<!-- shop marker -->
<path class="pin" d="M1546 1908C1540 1830 1510 1790 1475 1730 1445 1690 1430 1660 1430 1620A117 117 0 0 1 1664 1620C1664 1660 1650 1690 1620 1735 1580 1795 1558 1850 1546 1908Z"/>
<path class="hand-shadow" d="M1486 1544H1576V1556L1594 1580 1612 1612 1626 1642 1620 1656 1596 1652 1584 1636V1732L1578 1742H1564L1556 1732V1692H1516L1496 1676 1470 1650V1590L1480 1560Z"/>
<path class="hand" d="M1484 1540H1573V1552H1579V1564H1589V1582H1597V1596H1607V1618H1619V1630H1623V1650H1609V1646H1597V1634H1583V1732H1558V1684H1546V1692H1534V1682H1514V1674H1494V1662H1476V1640H1468V1592H1472V1574H1480V1558H1484Z"/>
<path class="fingers" d="M1496 1640V1670M1516 1646V1678M1536 1650V1688M1557 1640V1690"/>
</svg>
<div class="zoom-controls">
<button class="zoom-button" aria-label="Zoom out"><svg viewBox="0 0 107 107"><path d="M22.5 54H85.5"/></svg></button>
<button class="zoom-button" aria-label="Zoom in"><svg viewBox="0 0 107 107"><path d="M22.5 54H85.5M54 22.5V85.5"/></svg></button>
</div>
</section>
<section class="sheet">
<div class="order">
<h1 class="product">Gold Necklace</h1>
<p class="detail">Quantity 799.99</p>
<p class="detail">Quantity 1</p>
</div>
<button class="close">Close</button>
</section>
</main>
</body>
</html>
```

FILE: styles.css
```css
* { box-sizing: border-box; }
body { margin: 0; }
.screen {
  display: flex;
  flex-direction: column;
  height: 2177px;
  padding: 10px 30px 0;
  overflow: hidden;
  font-family: Roboto, sans-serif;
  background:
    linear-gradient(#16232a, #16232a) 100% 0 / 480px 1px no-repeat,
    radial-gradient(ellipse 620px 1180px at 100% 100px, #509171 0, #509171 18%, #3d6b57 46%, #2d463f 66%, #1f2b33 82%, rgba(27, 29, 42, 0) 100%),
    radial-gradient(ellipse 700px 1000px at 0 1850px, #1b2c43, #1b2a38 45%, #1b1d2a);
}
.map { position: relative; flex: none; width: 999px; height: 828px; margin-left: 11px; }
.map-canvas { display: block; width: 100%; height: 100%; overflow: hidden; }
.zoom-controls { position: absolute; left: 364px; top: 666px; display: flex; gap: 55px; }
.zoom-button { width: 107px; height: 107px; padding: 0; border: 0; background: #fff; }
.zoom-button svg { display: block; width: 107px; height: 107px; fill: none; stroke: #000; stroke-width: 9.5; }
.sheet {
  position: relative;
  flex: 1;
  display: flex;
  flex-direction: column;
  justify-content: space-between;
  align-items: center;
  margin-top: -16px;
  padding: 63px 60px 46px;
  border-radius: 118px 118px 0 0;
  background: #fff;
}
.order { align-self: stretch; color: #000; font-size: 54px; line-height: 73px; letter-spacing: -.12px; }
.product, .detail { margin: 0; font-size: inherit; font-weight: 400; }
.product { font-weight: 700; }
.close {
  width: 600px;
  height: 144px;
  margin-right: 2px;
  padding: 2px 0 0;
  border: 0;
  border-radius: 72px;
  background: #03c490;
  color: #08292f;
  font: 500 42px Roboto, sans-serif;
  letter-spacing: .4px;
}

/* land cover */
.residential { fill: #dfdfdf; }
.water { fill: #abd3df; }
.farm { fill: #edefd6; }
.bare { fill: #f1eee8; }
.sand { fill: #f7e6bd; }
.lawn { fill: #dcfae0; }
.lawn-warm { fill: #dff6c0; }
.park { fill: #c8facc; }
.meadow { fill: #cdebb0; }
.forest { fill: #add19e; }
.forest-lt { fill: #c6e0bb; }
.cemetery { fill: #aacbaf; }
.industrial { fill: #ebdbe8; }
.retail { fill: #ffd6d1; }
.builtup { fill: #c8c7b6; }
.school { fill: #ffffe0; }
.pitch { fill: #88e0be; }
.stop { fill: #f9d7ba; }
.quarry { fill: #c5c3c3; }
.quarry-line { fill: none; stroke: #8f8f8f; stroke-width: 3; }
.trees { fill: #82a888; }
.tree { fill: #d9f0d5; }
.hill { fill: #c98a45; }
.pond { fill: none; stroke: #6aa0d0; stroke-width: 3; }
.stadium { fill: #88e0be; stroke: #c8facc; stroke-width: 5; }
.race { fill: none; stroke: #8fe3c6; stroke-width: 7; }
.marina { fill: none; stroke: #e6edf0; stroke-width: 4; }
.pier { fill: none; stroke: #e4eff3; stroke-width: 5; }
.mole { fill: none; stroke: #9aa3a6; stroke-width: 8; stroke-dasharray: 7 3; }
.lighthouse { fill: #dfe5e7; stroke: #9aa9b0; stroke-width: 4; stroke-dasharray: 5 4; }
.ferry { fill: none; stroke: #8791bd; stroke-width: 3; stroke-dasharray: 12 8; }
.yard { fill: none; stroke: #9a9a9a; stroke-width: 5; }
.mine { stroke: #eee; stroke-width: 4; }
.hedge { fill: none; stroke: #c4e9ad; stroke-width: 6; }
.track { fill: none; stroke: #c3a274; stroke-width: 2.5; stroke-dasharray: 14 7; }

/* roads and rails */
.street { fill: none; stroke: #fff; stroke-width: 4.8; }
.tertiary-casing, .secondary-casing, .motorway-casing { fill: none; stroke-linejoin: round; stroke-linecap: round; }
#tertiary-under > path { stroke: var(--road, #c9c9c9); stroke-width: var(--road-width, 12px); }
.tertiary { --road: #fff; --road-width: 9px; }
#secondary-under > path { stroke: var(--road, #bdbf8d); stroke-width: var(--road-width, 20px); }
.secondary { --road: #f6f9be; --road-width: 16px; }
#motorway-under > path { stroke: var(--road, #d5607e); stroke-width: var(--road-width, 29px); }
.motorway { --road: #e892a2; --road-width: 26px; }
#motorway-under > .ramp { stroke-width: 12px; }
.orange { fill: #f59a7c; stroke: none; }
.orange path { fill: none; stroke: #fbcf9a; stroke-width: 16; }
.roundabout-yellow { fill: none; stroke: #f6f9be; stroke-width: 13; }
.underpass { stroke: #df6a80; stroke-width: 20; }
.roundabout-orange { fill: none; stroke: #f1998f; stroke-width: 12; }
.rail { fill: none; }
#rails > path { stroke: var(--rail, #767676); stroke-width: var(--rail-width, 12px); stroke-dasharray: var(--rail-dash, none); }
.rail-dash { --rail: #d8d8d8; --rail-width: 4px; --rail-dash: 20 22; }
.rail-thin { fill: none; stroke: #777; stroke-width: 9; stroke-dasharray: 24 10; }
.station { fill: #7b83b3; }
.cycle { fill: none; stroke: #4e5bd0; stroke-width: 3.8; stroke-dasharray: 4 6; }

/* route and labels */
.route { fill: none; stroke: #4d4df0; stroke-opacity: .76; stroke-width: 14; stroke-linejoin: round; }
.route-strong { stroke: #6431c8; stroke-opacity: .88; stroke-width: 18; }
.route-end { fill: none; stroke: #2625f4; stroke-opacity: .9; stroke-width: 12; stroke-dasharray: 18 2; }
.map text { font-family: "Noto Sans", sans-serif; paint-order: stroke; stroke-linejoin: round; }
.place text { fill: #434343; stroke: rgba(255, 255, 255, .75); stroke-width: 7; font-size: 41px; text-anchor: middle; }
.place .city { font-size: 50px; }
.place .suburb { font-size: 38px; }
.place .village { font-size: 35px; }
.shield text { fill: #514c4c; font-size: 34px; text-anchor: middle; }
.shield rect { stroke-width: 3; }
.shield-plain { fill: #f2f2f0; stroke: #c5c5c5; }
.shield-red { fill: #edc8d0; stroke: #d29aa8; }
.shield-yellow { fill: #edf1cb; stroke: #c6c99c; }
.junction text { fill: #ad2f3c; stroke: rgba(255, 255, 255, .8); stroke-width: 6; font-size: 33px; font-style: italic; text-anchor: middle; }
.road-name text { fill: #38341f; stroke: rgba(247, 250, 191, .6); stroke-width: 3; font-size: 29px; }
.map .park-name { fill: #45935b; stroke: rgba(255, 255, 255, .75); stroke-width: 5; font-size: 34px; font-style: italic; text-anchor: middle; }
.map .quarry-name { fill: #404040; stroke: rgba(255, 255, 255, .6); stroke-width: 5; font-size: 32px; font-style: italic; text-anchor: middle; }
.map .region-name { fill: #999; stroke: rgba(255, 255, 255, .6); stroke-width: 4; font-size: 34px; }
.map .water-name { fill: #6a91c8; font-size: 32px; font-style: italic; }

/* markers */
.person-shadow { fill: #222; opacity: .55; filter: blur(9px); }
.person-shape { fill: #ffcd0b; stroke: #171200; stroke-width: 10; stroke-linejoin: round; filter: drop-shadow(0 0 5px rgba(0, 0, 0, .8)); }
.person-shape circle { fill: #ffdf55; }
.pin { fill: #64b648; stroke: #000; stroke-width: 11; stroke-linejoin: round; }
.hand-shadow { fill: #17380c; stroke: #17380c; stroke-width: 12; filter: blur(3px); }
.hand { fill: #fff; }
.fingers { fill: none; stroke: #8a8a8a; stroke-width: 4; }
```
